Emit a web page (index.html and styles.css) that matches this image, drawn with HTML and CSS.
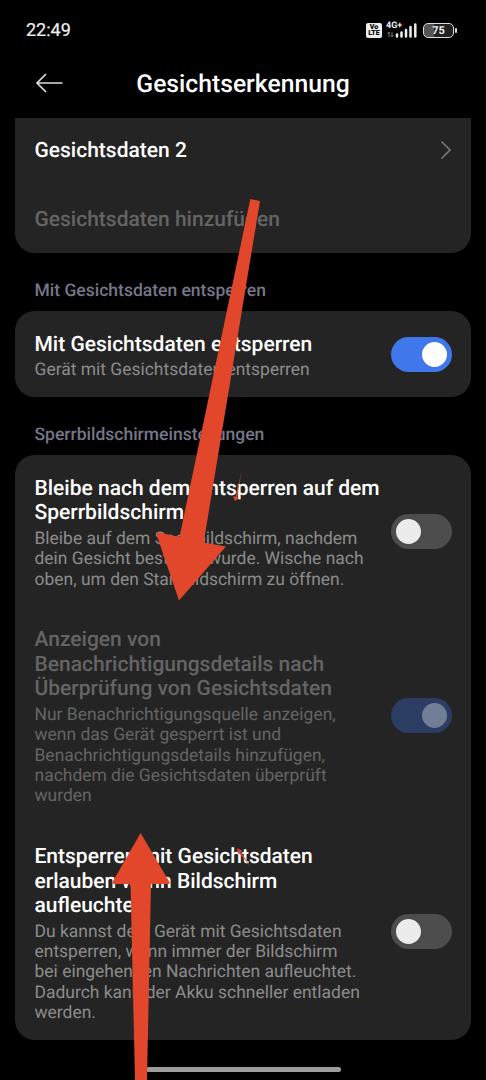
FILE: index.html
```html
<!DOCTYPE html>
<html lang="de">
<head>
<meta charset="utf-8">
<title>Gesichtserkennung</title>
<link rel="stylesheet" href="styles.css">
</head>
<body>
<div class="phone">
  <div class="status">
    <span class="clock">22:49</span>
    <div class="indicators">
      <div class="volte"><span>Vo</span><span>LTE</span></div>
      <div class="network">
        <span class="net-label">4G+</span>
        <svg class="signal" width="32" height="16" viewBox="0 0 32 16">
          <path d="M3 15V10M1.500 12L3 10l1 1.500M6 10v5M5 13.500L6 15l1.500-2" fill="none" stroke="#777" stroke-width="1"/>
          <path d="M11 14.500v-2M15.500 14.500v-4M20 14.500V8M24.500 14.500V5M29.300 14.500V2.500" fill="none" stroke="#eee" stroke-width="2.500" stroke-linecap="round"/>
        </svg>
      </div>
      <div class="battery"><div class="cell"><span>75</span></div><i class="nub"></i></div>
    </div>
  </div>
  <header class="header">
    <svg class="back" width="30" height="22" viewBox="0 0 30 22"><path d="M27.500 11H2M11 2L2 11l9 9" fill="none" stroke="#ddd" stroke-width="1.700"/></svg>
    <h1>Gesichtserkennung</h1>
  </header>
  <main>
    <section class="card card-top">
      <div class="row"><span class="title">Gesichtsdaten 2</span>
        <svg class="chevron" width="12" height="20" viewBox="0 0 12 20"><path d="M1.500 1.500l8.500 8.500-8.500 8.500" fill="none" stroke="#777" stroke-width="1.700"/></svg>
      </div>
      <div class="row"><span class="title dim">Gesichtsdaten hinzufügen</span></div>
    </section>
    <h2>Mit Gesichtsdaten entsperren</h2>
    <section class="card">
      <div class="item">
        <div class="text"><div class="title">Mit Gesichtsdaten entsperren</div><div class="desc">Gerät mit Gesichtsdaten entsperren</div></div>
        <div class="toggle on"><i></i></div>
      </div>
    </section>
    <h2>Sperrbildschirmeinstellungen</h2>
    <section class="card">
      <div class="item">
        <div class="text">
          <div class="title">Bleibe nach dem Entsperren auf dem<br>Sperrbildschirm</div>
          <div class="desc">Bleibe auf dem Sperrbildschirm, nachdem<br>dein Gesicht bestätigt wurde. Wische nach<br>oben, um den Startbildschirm zu öffnen.</div>
        </div>
        <div class="toggle"><i></i></div>
      </div>
      <div class="item disabled">
        <div class="text">
          <div class="title">Anzeigen von<br>Benachrichtigungsdetails nach<br>Überprüfung von Gesichtsdaten</div>
          <div class="desc">Nur Benachrichtigungsquelle anzeigen,<br>wenn das Gerät gesperrt ist und<br>Benachrichtigungsdetails hinzufügen,<br>nachdem die Gesichtsdaten überprüft<br>wurden</div>
        </div>
        <div class="toggle on"><i></i></div>
      </div>
      <div class="item">
        <div class="text">
          <div class="title">Entsperren mit Gesichtsdaten<br>erlauben wenn Bildschirm<br>aufleuchtet</div>
          <div class="desc">Du kannst dein Gerät mit Gesichtsdaten<br>entsperren, wenn immer der Bildschirm<br>bei eingehenden Nachrichten aufleuchtet.<br>Dadurch kann der Akku schneller entladen<br>werden.</div>
        </div>
        <div class="toggle"><i></i></div>
      </div>
    </section>
  </main>
  <div class="home-bar"></div>
  <svg class="arrows" width="486" height="1080" viewBox="0 0 486 1080">
    <g fill="#e2472b">
      <path d="M250.300 199L260 201L203.700 542.500L226 546.500L179 600.500L156 533Q157 531.500 159 532.500L179.500 537Z"/>
      <path d="M140.600 833L170 883Q169.500 884 168 884H151L147 1080H135L130.500 884H114Q112 884 112.500 882Z"/>
      <path d="M241.500 472L237 497L239 498L235 501L233 496L235.500 497Z"/>
      <path d="M237 848L242.500 851L240.500 852L251 867L239.500 853.500L238.500 854.500Z"/>
    </g>
  </svg>
</div>
</body>
</html>
```
FILE: styles.css
```css
* { box-sizing: border-box; }
body { margin: 0; background: #000; font-family: Roboto, "Noto Sans", sans-serif; }
.phone { position: relative; width: 486px; height: 1080px; overflow: hidden; display: flex; flex-direction: column; background: #000; color: #fff; white-space: nowrap; text-rendering: geometricPrecision; }
.status { height: 60px; display: flex; align-items: center; justify-content: space-between; padding: 0 29px 0 26px; }
.clock { padding-top: 2px; font-size: 18px; line-height: 22px; color: #eee; -webkit-text-stroke: 0.2px #eee; }
.indicators { display: flex; align-items: center; }
.volte { width: 16px; height: 15px; margin-right: 4px; border-radius: 2px; background: #eee; color: #000; font-size: 7px; line-height: 6.500px; font-weight: 900; display: flex; flex-direction: column; align-items: center; justify-content: center; }
.network { width: 32px; height: 17px; margin-right: 5px; display: grid; }
.network > * { grid-area: 1 / 1; }
.net-label { font-size: 9px; line-height: 9px; font-weight: 700; color: #eee; }
.battery { display: flex; align-items: center; }
.cell { width: 31px; height: 15px; border: 1.500px solid #ddd; border-radius: 5px; background: linear-gradient(90deg, #555 36%, #222 36%); text-align: center; font-size: 11px; line-height: 13px; font-weight: 700; color: #eee; }
.nub { width: 2px; height: 5px; margin-left: 1px; border-radius: 1px; background: #ddd; }
.header { height: 58px; display: grid; grid-template-columns: 100px 1fr 100px; align-items: start; }
.back { margin: 12px 0 0 35px; }
h1 { margin: 9px 0 0; font-size: 24.700px; line-height: 32px; font-weight: 500; text-align: center; }
main { padding: 0 15px; }
.card { border-radius: 20px; background: #242424; }
.card-top { height: 135px; border-radius: 0 0 20px 20px; }
.row { height: 69px; display: flex; align-items: center; justify-content: space-between; padding: 0 19.500px; }
.card-top .row:first-child { height: 67px; padding-top: 2px; padding-bottom: 4px; }
.row .title { padding-top: 1px; }
.chevron { margin-top: -2px; }
.title { font-size: 21px; line-height: 24.600px; font-weight: 500; }
.dim { color: #646464; }
.desc { margin-top: 3px; font-size: 17.470px; line-height: 20.300px; color: #8c8c8c; }
h2 { margin: 0; height: 58px; padding: 26px 19.500px 0; font-size: 17.500px; line-height: 24px; font-weight: 500; color: #777689; }
.item { display: flex; align-items: center; justify-content: space-between; padding: 17.400px 19.500px 16.800px; }
.text { padding-top: 4.200px; }
.disabled .title, .disabled .desc { color: #646464; }
.toggle { width: 61px; height: 35px; padding: 5px; border-radius: 18px; background: #4d4d4d; display: flex; }
.toggle i { width: 25px; height: 25px; border-radius: 50%; background: #ececec; }
.toggle.on { justify-content: flex-end; background: #4078ec; }
.toggle.on i { background: #fff; }
.disabled .toggle.on { background: #2c3d64; }
.disabled .toggle.on i { background: #727e98; }
.home-bar { width: 195px; height: 5px; margin: auto auto 8px; border-radius: 3px; background: #9d9d9d; }
.arrows { position: absolute; inset: 0; }
```
